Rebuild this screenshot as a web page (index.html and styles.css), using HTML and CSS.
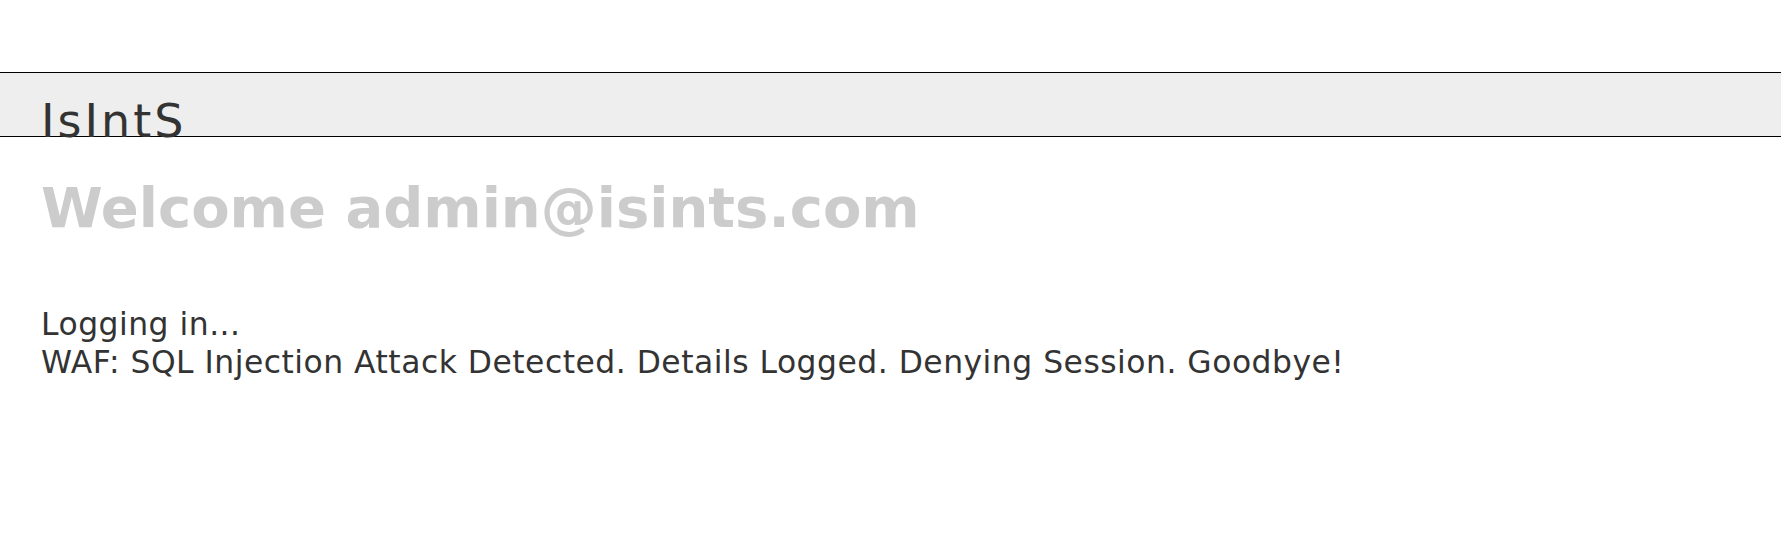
FILE: index.html
```html
<!DOCTYPE html>
<html>
<head>
<meta charset="utf-8">
<title>IsIntS</title>
<link rel="stylesheet" href="styles.css">
</head>
<body>
<header class="site-header">
  <div class="brand">IsIntS</div>
</header>
<main class="content">
  <h1 class="welcome">Welcome admin@isints.com</h1>
  <div class="messages">
    <div class="msg">Logging in...</div>
    <div class="msg">WAF: SQL Injection Attack Detected. Details Logged. Denying Session. Goodbye!</div>
  </div>
</main>
</body>
</html>
```
FILE: styles.css
```css
html, body {
  margin: 0;
  padding: 0;
  background: #fff;
}
body {
  font-family: "DejaVu Sans", Tahoma, Verdana, sans-serif;
  color: #333;
}
.site-header {
  margin-top: 72px;
  height: 63px;
  background: #eeeeee;
  border-top: 1px solid #000;
  border-bottom: 1px solid #000;
  padding: 0 0 0 41px;
  box-sizing: content-box;
}
.brand {
  font-size: 46px;
  line-height: 46px;
  padding-top: 25px;
  letter-spacing: 3px;
  color: #333;
}
.content {
  padding-left: 41px;
}
.welcome {
  margin: 43px 0 0 0;
  font-size: 56px;
  line-height: 56px;
  font-weight: bold;
  color: #cccccc;
}
.messages {
  margin-top: 69px;
}
.msg {
  font-size: 31.4px;
  line-height: 38px;
  letter-spacing: 0.5px;
}
```
